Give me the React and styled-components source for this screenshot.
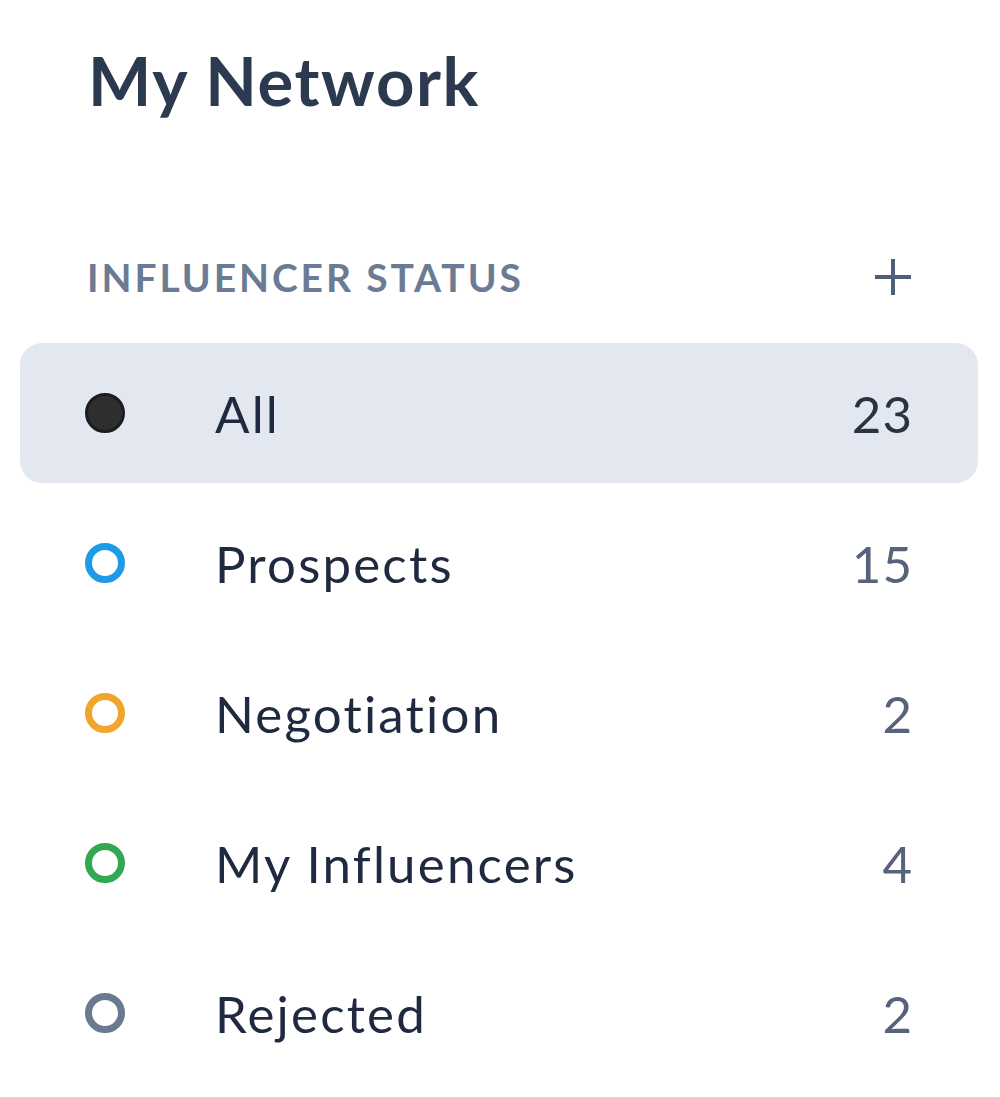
import React from 'react';
import styled, { createGlobalStyle } from 'styled-components';

const GlobalStyle = createGlobalStyle`
  html, body {
    margin: 0;
    padding: 0;
    background: #ffffff;
  }
  body {
    font-family: Lato, "Noto Sans", sans-serif;
  }
`

const Sidebar = styled.aside`
  width: 1000px;
  box-sizing: border-box;
  padding: 40px 22px 0 20px;
`

const Title = styled.h1`
  margin: 0 0 0 68px;
  font-size: 67px;
  line-height: 80px;
  font-weight: 700;
  letter-spacing: 1.6px;
  color: #2c3a4f;
`

const SectionHeader = styled.div`
  display: flex;
  align-items: center;
  justify-content: space-between;
  height: 60px;
  margin-top: 127px;
  padding: 0 65px 0 67px;
`

const SectionLabel = styled.span`
  font-size: 39px;
  font-weight: 700;
  letter-spacing: 2.9px;
  color: #6b7b93;
  text-transform: uppercase;
`

const AddButton = styled.button`
  display: flex;
  align-items: center;
  justify-content: center;
  width: 40px;
  height: 40px;
  padding: 0;
  border: 0;
  background: none;
  color: #4f5f75;
  cursor: pointer;
`

const StatusList = styled.ul`
  list-style: none;
  margin: 36px 0 0;
  padding: 0;
  display: flex;
  flex-direction: column;
  gap: 10px;
`

const StatusRow = styled.li`
  display: flex;
  align-items: center;
  height: 140px;
  padding: 0 65px;
  border-radius: 22px;
  background: ${p => (p.$active ? '#e3e8f0' : 'transparent')};
`

const Dot = styled.span`
  flex: none;
  box-sizing: border-box;
  width: 40px;
  height: 40px;
  border-radius: 50%;
  border: 7px solid ${p => p.$color};
  background: ${p => (p.$filled ? '#2e2e30' : 'transparent')};
  ${p => p.$filled && 'border-width: 3px; border-color: #1c1c1e;'}
`

const Label = styled.span`
  flex: 1;
  margin-left: 90px;
  font-size: 51px;
  font-weight: 400;
  letter-spacing: 2.2px;
  color: #1f2a40;
`

const Count = styled.span`
  font-size: 51px;
  font-weight: 400;
  letter-spacing: 1px;
  color: ${p => (p.$active ? '#2a3244' : '#56637a')};
`

const statuses = [
  { name: 'All', count: 23, color: '#1c1c1e', filled: true },
  { name: 'Prospects', count: 15, color: '#1e9be6' },
  { name: 'Negotiation', count: 2, color: '#f0a52c' },
  { name: 'My Influencers', count: 4, color: '#33a852' },
  { name: 'Rejected', count: 2, color: '#6b7a90' },
];

const PlusIcon = () => (
  <svg width="40" height="40" viewBox="0 0 40 40" fill="none">
    <path d="M20 2v36M2 20h36" stroke="currentColor" strokeWidth="4" />
  </svg>
);

export default function App() {
  return (
    <>
      <GlobalStyle />
      <Sidebar>
        <Title>My Network</Title>
        <SectionHeader>
          <SectionLabel>Influencer Status</SectionLabel>
          <AddButton aria-label="Add status">
            <PlusIcon />
          </AddButton>
        </SectionHeader>
        <StatusList>
          {statuses.map((s, i) => (
            <StatusRow key={s.name} $active={i === 0}>
              <Dot $color={s.color} $filled={s.filled} />
              <Label>{s.name}</Label>
              <Count $active={i === 0}>{s.count}</Count>
            </StatusRow>
          ))}
        </StatusList>
      </Sidebar>
    </>
  );
}
